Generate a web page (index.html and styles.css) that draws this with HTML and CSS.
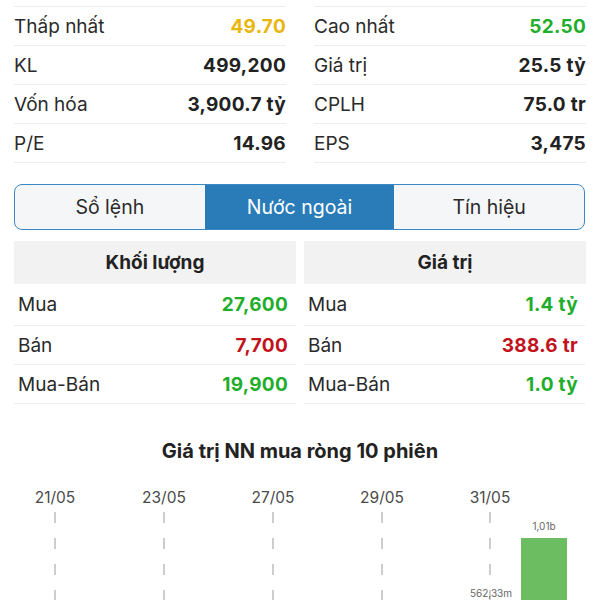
FILE: index.html
```html
<!DOCTYPE html>
<html lang="vi">
<head>
    <meta charset="UTF-8">
    <meta name="viewport" content="width=device-width, initial-scale=1.0">
    <title>Chi tiết cổ phiếu</title>
    <link rel="stylesheet" href="styles.css">
</head>
<body>
    <div class="page">
        <div class="stats">
            <div class="stats-col">
                <div class="stat-row"><span class="label">Thấp nhất</span><span class="value yellow">49.70</span></div>
                <div class="stat-row"><span class="label">KL</span><span class="value">499,200</span></div>
                <div class="stat-row"><span class="label">Vốn hóa</span><span class="value">3,900.7 tỷ</span></div>
                <div class="stat-row"><span class="label">P/E</span><span class="value">14.96</span></div>
            </div>
            <div class="stats-col">
                <div class="stat-row"><span class="label">Cao nhất</span><span class="value green">52.50</span></div>
                <div class="stat-row"><span class="label">Giá trị</span><span class="value">25.5 tỷ</span></div>
                <div class="stat-row"><span class="label">CPLH</span><span class="value">75.0 tr</span></div>
                <div class="stat-row"><span class="label">EPS</span><span class="value">3,475</span></div>
            </div>
        </div>

        <div class="tabs">
            <div class="tab">Sổ lệnh</div>
            <div class="tab active">Nước ngoài</div>
            <div class="tab">Tín hiệu</div>
        </div>

        <div class="foreign">
            <div class="foreign-col left">
                <div class="foreign-head">Khối lượng</div>
                <div class="foreign-row"><span class="label">Mua</span><span class="value green">27,600</span></div>
                <div class="foreign-row"><span class="label">Bán</span><span class="value red">7,700</span></div>
                <div class="foreign-row"><span class="label">Mua-Bán</span><span class="value green">19,900</span></div>
            </div>
            <div class="foreign-col right">
                <div class="foreign-head">Giá trị</div>
                <div class="foreign-row"><span class="label">Mua</span><span class="value green">1.4 tỷ</span></div>
                <div class="foreign-row"><span class="label">Bán</span><span class="value red">388.6 tr</span></div>
                <div class="foreign-row"><span class="label">Mua-Bán</span><span class="value green">1.0 tỷ</span></div>
            </div>
        </div>

        <div class="chart">
            <h3 class="chart-title">Giá trị NN mua ròng 10 phiên</h3>
            <svg class="chart-svg" width="600" height="120" viewBox="0 0 600 120">
                <g class="dates">
                    <text x="55" y="21">21/05</text>
                    <text x="164" y="21">23/05</text>
                    <text x="273" y="21">27/05</text>
                    <text x="382" y="21">29/05</text>
                    <text x="490" y="21">31/05</text>
                </g>
                <g class="grid">
                    <line x1="55" y1="30" x2="55" y2="120"></line>
                    <line x1="164" y1="30" x2="164" y2="120"></line>
                    <line x1="273" y1="30" x2="273" y2="120"></line>
                    <line x1="382" y1="30" x2="382" y2="120"></line>
                    <line x1="490" y1="30" x2="490" y2="120"></line>
                </g>
                <rect class="bar" x="521" y="56" width="46" height="70"></rect>
                <text class="bar-label" x="544" y="48">1,01b</text>
                <text class="bar-label end" x="512" y="115">562,33m</text>
            </svg>
        </div>
    </div>
</body>
</html>
```

FILE: styles.css
```css
body {
    font-family: 'Inter', 'Liberation Sans', sans-serif;
    margin: 0;
    padding: 0;
    background: #fff;
    color: #222;
    overflow: hidden;
}

.page {
    width: 600px;
    padding-top: 6px;
}

/* top stats */
.stats {
    display: grid;
    grid-template-columns: 272px 272px;
    column-gap: 28px;
    padding: 0 14px;
}
.stats-col {
    border-top: 1px solid #eeeeee;
}
.stat-row {
    display: flex;
    justify-content: space-between;
    align-items: center;
    height: 38px;
    border-bottom: 1px solid #eeeeee;
    font-size: 19px;
}
.label {
    color: #2a2a2a;
}
.value {
    font-weight: 700;
    color: #222;
    letter-spacing: 0.3px;
}
.yellow { color: #e9b60e; }
.green { color: #1fae2b; }
.red { color: #c2121c; }

/* tabs */
.tabs {
    display: flex;
    margin: 21px 15px 0 14px;
    height: 44px;
    border: 1.5px solid #3d88c4;
    border-radius: 8px;
    overflow: hidden;
    background: #f5f6f8;
}
.tab {
    flex: 1;
    display: flex;
    align-items: center;
    justify-content: center;
    font-size: 19.5px;
    color: #2a2a2a;
}
.tab.active {
    background: #2a7cb9;
    color: #fff;
}

/* foreign trading */
.foreign {
    display: flex;
    gap: 8px;
    margin: 11px 14px 0 14px;
}
.foreign-col {
    flex: 1;
}
.foreign-head {
    height: 43px;
    background: #f2f2f2;
    display: flex;
    align-items: center;
    justify-content: center;
    font-size: 19px;
    font-weight: 700;
    color: #222;
}
.foreign-row {
    display: flex;
    justify-content: space-between;
    align-items: center;
    height: 38px;
    border-bottom: 1px solid #eeeeee;
    font-size: 19px;
}
.foreign-row:nth-child(2) {
    height: 41px;
}
.foreign-col.left .foreign-row {
    padding-left: 4px;
    padding-right: 8px;
}
.foreign-col.right .foreign-row {
    padding-left: 4px;
    padding-right: 7px;
    margin-right: 1px;
}

/* chart */
.chart {
    margin-top: 32px;
}
.chart-title {
    margin: 0;
    text-align: center;
    font-size: 20px;
    font-weight: 700;
    color: #222;
    line-height: 30px;
}
.chart-svg {
    display: block;
    margin-top: 16px;
}
.dates text {
    font-family: 'Inter', 'Liberation Sans', sans-serif;
    font-size: 15.5px;
    fill: #4a4a4a;
    text-anchor: middle;
}
.grid line {
    stroke: #bdbdbd;
    stroke-width: 1.5;
    stroke-dasharray: 11 15;
}
.bar {
    fill: #6cbd62;
}
.bar-label {
    font-family: 'Inter', 'Liberation Sans', sans-serif;
    font-size: 10px;
    fill: #666;
    text-anchor: middle;
}
.bar-label.end {
    text-anchor: end;
}
```
